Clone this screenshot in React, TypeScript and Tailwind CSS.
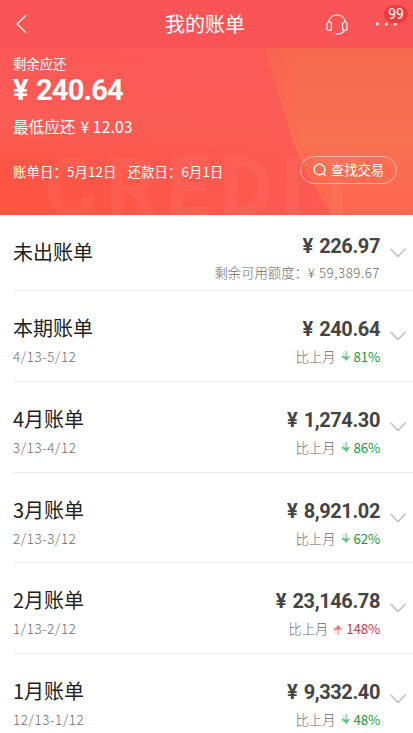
type Bill = {
  title: string;
  period?: string;
  amount: string;
  change?: string;
  up?: boolean;
};

const bills: Bill[] = [
  { title: '本期账单', period: '4/13-5/12', amount: '240.64', change: '81%' },
  { title: '4月账单', period: '3/13-4/12', amount: '1,274.30', change: '86%' },
  { title: '3月账单', period: '2/13-3/12', amount: '8,921.02', change: '62%' },
  { title: '2月账单', period: '1/13-2/12', amount: '23,146.78', change: '148%', up: true },
  { title: '1月账单', period: '12/13-1/12', amount: '9,332.40', change: '48%' },
];

function Chevron() {
  return (
    <svg className="block h-[10px] w-[16px]" viewBox="0 0 16 10" fill="none" stroke="#c2c2c2" strokeWidth="1.6" strokeLinecap="round">
      <path d="M1 1.200l7 7.300 7-7.300" />
    </svg>
  );
}

function Trend({ up }: { up?: boolean }) {
  const color = up ? '#e2594f' : '#3fae6a';
  return (
    <svg className="mr-[3px] ml-[4px] block h-[12px] w-[11px]" viewBox="0 0 11 12">
      <g transform={up ? 'translate(0 12) scale(1 -1)' : undefined} fill={color}>
        <path d="M5 0h2.500v6H5z" opacity=".4" />
        <path d="M1 6l3-1.500V8z" opacity=".3" />
        <path d="M2 5l3 .5h2.500L10.300 5 6.300 10z" opacity=".8" />
        <path d="M2 1h2.500v5H2z" opacity=".18" />
        <path d="M0 4h3v4H0z" opacity=".1" />
      </g>
    </svg>
  );
}

function Amount({ value }: { value: string }) {
  return (
    <div className="flex h-[24px] items-center font-[Roboto,'Noto_Sans_CJK_SC',sans-serif] text-[20px] leading-[24px] font-bold text-[#444]">
      <span className="mr-[6px]">¥</span>
      <span className="tracking-[-0.400px]">{value}</span>
    </div>
  );
}

export default function App() {
  return (
    <div className="h-[733px] w-[413px] overflow-hidden bg-white font-['Noto_Sans_CJK_SC',sans-serif] text-[13.33px]">
      <header className="grid h-[48px] grid-cols-[1fr_auto_1fr] items-center bg-[#fb5456] text-white">
        <svg className="ml-[15.500px] h-[20px] w-[11px]" viewBox="0 0 11 20" fill="none" stroke="currentColor" strokeWidth="1.2">
          <path d="M10.200 1L1.200 10l9 9" />
        </svg>
        <h1 className="-ml-[3px] text-[20px] leading-[24px]">我的账单</h1>
        <div className="relative flex h-full items-center justify-end pr-[16px]">
          <svg className="mr-[28px] h-[21px] w-[22px]" viewBox="0 0 22 21" fill="none" stroke="currentColor" strokeWidth="1.2">
            <path d="M2.800 8C3.300 3.700 6.600 1 11 1s7.700 2.700 8.200 7" />
            <rect x="1" y="8" width="4.400" height="8.500" rx="1.900" />
            <rect x="16.600" y="8" width="4.400" height="8.500" rx="1.900" />
            <path d="M18.200 16.500c-1 2.200-2.800 3.200-6 3.300H9.500" />
          </svg>
          <svg className="h-[4px] w-[21px]" viewBox="0 0 21 4" fill="currentColor">
            <rect y=".7" width="2.500" height="2.600" />
            <rect x="9" y=".7" width="2.500" height="2.600" />
            <rect x="18" y=".7" width="2.500" height="2.600" />
          </svg>
          <span className="absolute top-[5px] right-[5px] flex h-[18px] w-[24px] items-center justify-center rounded-full bg-[#ef3a38]/90 font-[Roboto,sans-serif] text-[14px] leading-none">
            99
          </span>
        </div>
      </header>

      <section className="relative h-[167px] overflow-hidden bg-[#fc5a50] text-white">
        <svg className="absolute inset-0 h-full w-full" viewBox="0 0 413 167" preserveAspectRatio="none">
          <defs>
            <linearGradient id="base" x1="0" y1="0" x2="0" y2="1">
              <stop offset="0" stopColor="#fc5758" />
              <stop offset=".45" stopColor="#f95d54" />
              <stop offset=".7" stopColor="#fd5545" />
              <stop offset="1" stopColor="#ff5342" />
            </linearGradient>
            <linearGradient id="side" x1="0" y1="0" x2="0" y2="1">
              <stop offset="0" stopColor="#f7694e" />
              <stop offset=".55" stopColor="#f87151" />
              <stop offset="1" stopColor="#fe664f" />
            </linearGradient>
            <linearGradient id="mid" x1="0" y1="0" x2="1" y2="0">
              <stop offset="0" stopColor="#fb5c56" stopOpacity="0" />
              <stop offset="1" stopColor="#fb5c56" />
            </linearGradient>
            <linearGradient id="edge" x1="0" y1="0" x2="1" y2="0">
              <stop offset="0" stopColor="#fff" stopOpacity=".5" />
              <stop offset=".25" stopColor="#fff" />
            </linearGradient>
            <mask id="fade">
              <rect x="262" width="151" height="167" fill="url(#edge)" />
            </mask>
          </defs>
          <rect width="413" height="167" fill="url(#base)" />
          <rect width="413" height="167" fill="url(#mid)" />
          <path d="M264 0h149v167H332Q294 110 283 60Z" fill="url(#side)" mask="url(#fade)" />
          <text x="44" y="168" fill="#fff" fillOpacity=".045" fontFamily="Roboto, sans-serif" fontWeight="700" fontSize="82" textLength="318">
            CREDIT
          </text>
        </svg>
        <div className="relative pl-[13px]">
          <p className="pt-[6px] leading-[20px]">剩余应还</p>
          <p className="mt-[2px] flex h-[29px] items-center font-[Roboto,sans-serif] text-[29px] leading-[29px] font-bold">
            <span className="mr-[7px] w-[16px]">¥</span>
            <span className="tracking-[-0.800px]">240.64</span>
          </p>
          <p className="mt-[11px] text-[15.600px] leading-[20px]">
            最低应还<span className="ml-[5px] tracking-[0.150px]">¥ 12.03</span>
          </p>
          <div className="mt-[20px] flex h-[28px] items-center pr-[16px]">
            <span className="mt-[4px] tracking-[0.150px]">账单日：5月12日</span>
            <span className="mt-[4px] ml-[11px] tracking-[0.150px]">还款日：6月1日</span>
            <button className="ml-auto flex h-[28px] w-[97px] items-center justify-center gap-[4px] rounded-full border border-white/50">
              <svg className="h-[14px] w-[14px]" viewBox="0 0 14 14" fill="none" stroke="currentColor" strokeWidth="1.3">
                <circle cx="6.500" cy="6.500" r="5.400" />
                <path d="M10.200 10.200l2.800 2.800" />
              </svg>
              <span>查找交易</span>
            </button>
          </div>
        </div>
      </section>

      <main className="ml-[13px]">
        <section className="flex h-[76px] border-b border-[#ebebeb]">
          <h2 className="pt-[25px] text-[20px] leading-[24px] text-[#222]">未出账单</h2>
          <div className="ml-auto flex flex-col items-end pt-[19px]">
            <Amount value="226.97" />
            <p className="mt-[5px] leading-[20px] font-light text-[#6a6a6a]">
              剩余可用额度：<span className="tracking-[0.500px]">¥ 59,389.67</span>
            </p>
          </div>
          <div className="pt-[33px] pr-[7px] pl-[10px]">
            <Chevron />
          </div>
        </section>
        {bills.map((bill) => (
          <section key={bill.title} className="flex h-[90.75px] border-b border-[#ebebeb]">
            <div className="pt-[25px]">
              <h2 className="text-[20px] leading-[24px] text-[#222]">{bill.title}</h2>
              <p className="mt-[7px] leading-[20px] font-light tracking-[0.650px] text-[#6a6a6a]">{bill.period}</p>
            </div>
            <div className="ml-auto flex flex-col items-end pt-[26px]">
              <Amount value={bill.amount} />
              <p className="mt-[6px] flex items-center leading-[20px] font-light text-[#6a6a6a]">
                比上月
                <Trend up={bill.up} />
                <span className={bill.up ? 'font-normal tracking-[-0.200px] text-[#cf3a3f]' : 'font-normal tracking-[-0.200px] text-[#159a3c]'}>
                  {bill.change}
                </span>
              </p>
            </div>
            <div className="pt-[40px] pr-[7px] pl-[10px]">
              <Chevron />
            </div>
          </section>
        ))}
      </main>
    </div>
  );
}
